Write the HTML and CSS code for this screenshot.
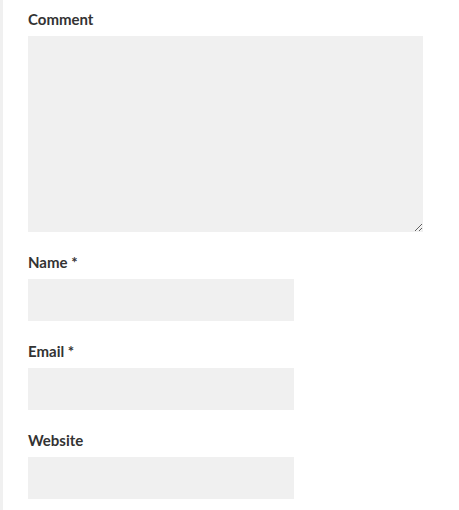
FILE: index.html
```html
<!DOCTYPE html>
<html lang="en">
  <head>
    <meta charset="UTF-8" />
    <meta name="viewport" content="width=device-width, initial-scale=1.0" />
    <title>Leave a comment</title>
    <link rel="stylesheet" href="styles.css">
  </head>
  <body>
    <div class="comment-area">
      <form class="comment-form">
        <p class="field">
          <label class="label" for="comment">Comment</label>
          <textarea class="textarea" id="comment" name="comment"></textarea>
        </p>
        <p class="field">
          <label class="label" for="author">Name <span class="required">*</span></label>
          <input type="text" class="input" id="author" name="author" />
        </p>
        <p class="field">
          <label class="label" for="email">Email <span class="required">*</span></label>
          <input type="email" class="input" id="email" name="email" />
        </p>
        <p class="field">
          <label class="label" for="url">Website</label>
          <input type="url" class="input" id="url" name="url" />
        </p>
      </form>
    </div>
  </body>
</html>
```

FILE: styles.css
```css
body {
  margin: 0;
  font-family: Lato, "Open Sans", Arial, sans-serif;
  color: #333333;
  background: #ffffff;
}
.comment-area {
  border-left: 3px solid #f0f0f0;
  padding: 11px 0 0 25px;
  min-height: 510px;
  box-sizing: border-box;
}
.comment-form {
  margin: 0;
}
.field {
  margin: 0 0 22px;
}
.label {
  display: block;
  font-size: 15px;
  font-weight: bold;
  line-height: 16px;
  margin-bottom: 9px;
}
.required {
  font-weight: bold;
}
.input,
.textarea {
  display: block;
  box-sizing: border-box;
  border: none;
  border-radius: 0;
  background-color: #f0f0f0;
  font-family: inherit;
  font-size: 14px;
  padding: 8px 10px;
  outline: none;
}
.textarea {
  width: 395px;
  height: 196px;
}
.input {
  width: 266px;
  height: 42px;
}
```
